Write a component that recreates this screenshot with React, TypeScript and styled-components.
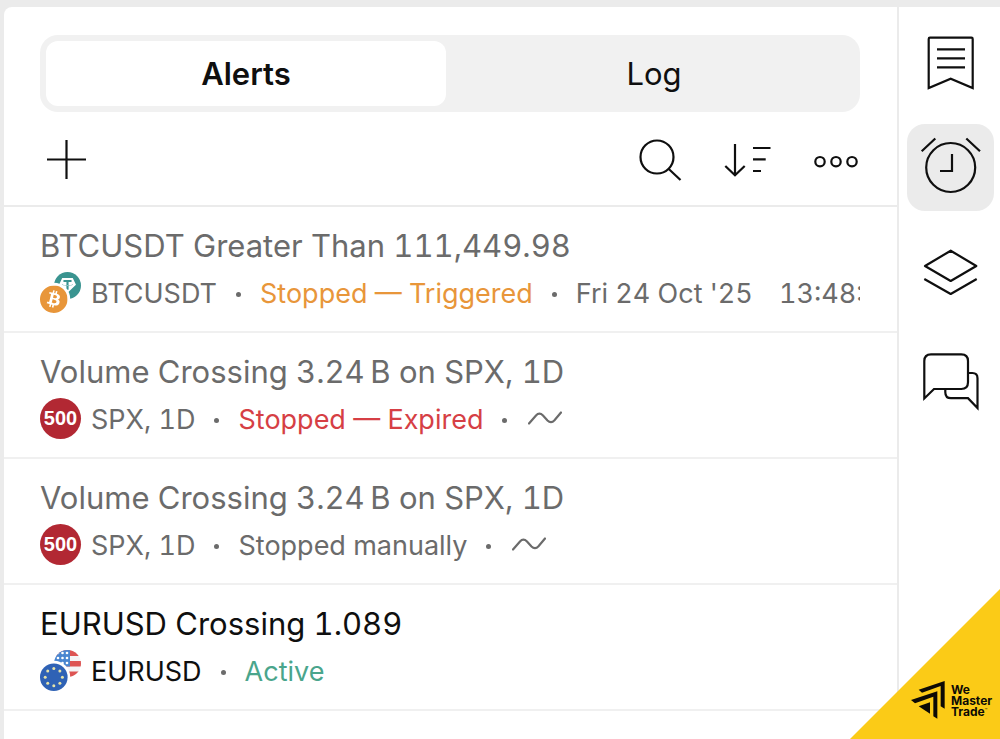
import React, { useState } from "react";
import styled, { createGlobalStyle } from "styled-components";
import { SiBitcoin, SiTether } from "react-icons/si";

const GlobalStyle = createGlobalStyle`
  *, *::before, *::after { box-sizing: border-box; }
  body {
    margin: 0;
    background: #ebebeb;
    color: #0f0f0f;
    font-family: Inter, "Liberation Sans", sans-serif;
    font-variant-numeric: tabular-nums;
  }
  button {
    margin: 0;
    padding: 0;
    border: 0;
    background: none;
    color: inherit;
    font: inherit;
    cursor: pointer;
  }
`;

const Page = styled.div`
  display: flex;
  min-height: 100vh;
  padding: 7px 0 0 4px;
`;

const Panel = styled.main`
  flex: 1;
  min-width: 0;
  background: #fff;
  border-top-left-radius: 8px;
`;

const Header = styled.header`
  padding: 28px 37px 0 36px;
  border-bottom: 2px solid #ebebeb;
`;

const Segmented = styled.div`
  display: flex;
  gap: 8px;
  height: 77px;
  padding: 6px;
  border-radius: 18px;
  background: #f1f1f1;
`;

const Segment = styled.button<{ $active: boolean }>`
  flex: 1 1 0;
  border-radius: 12px;
  background: ${(p) => (p.$active ? "#fff" : "transparent")};
  font-size: 31px;
  line-height: 40px;
  font-weight: ${(p) => (p.$active ? 600 : 400)};
`;

const Toolbar = styled.div`
  display: flex;
  justify-content: space-between;
  padding: 23px 0 22px;
`;

const ToolGroup = styled.div`
  display: flex;
  gap: 40px;
`;

const ToolButton = styled.button`
  width: 48px;
  height: 48px;
`;

const LineIcon = styled.svg`
  display: block;
  width: 100%;
  height: 100%;
  overflow: visible;
  fill: none;
  stroke: currentColor;
  stroke-width: 2.2;
`;

const AlertList = styled.ul`
  margin: 0;
  padding: 0;
  list-style: none;
`;

const AlertRow = styled.li<{ $active?: boolean }>`
  padding: 19px 37px 18px 36px;
  border-bottom: 2px solid #f0f0f0;
  color: ${(p) => (p.$active ? "#0f0f0f" : "#6b6b6b")};
`;

const AlertTitle = styled.h2`
  margin: 0 0 6px;
  font-size: 31px;
  line-height: 40px;
  font-weight: 400;
  white-space: nowrap;
`;

const AlertMeta = styled.div`
  display: flex;
  align-items: center;
  height: 41px;
  overflow: hidden;
  font-size: 27px;
  line-height: 38px;
  white-space: nowrap;
`;

const SymbolIcon = styled.svg`
  flex: none;
  width: 41px;
  height: 41px;
  margin-right: 10px;
`;

const IndexBadge = styled.span`
  flex: none;
  width: 41px;
  height: 41px;
  margin-right: 10px;
  border-radius: 50%;
  background: #b22833;
  color: #fff;
  font: bold 20px/41px "Liberation Sans", sans-serif;
  text-align: center;
`;

const MetaText = styled.span`
  padding-top: 3px;
`;

const Dot = styled.span`
  flex: none;
  width: 5px;
  height: 5px;
  margin: 4px 19px 0;
  border-radius: 50%;
  background: #6b6b6b;
`;

const tones = {
  warning: "#e8963a",
  danger: "#d63f45",
  muted: "#6b6b6b",
  success: "#4aa58c",
};

const Status = styled(MetaText)<{ $tone: keyof typeof tones }>`
  color: ${(p) => tones[p.$tone]};
`;

const Time = styled.time`
  display: flex;
  gap: 26px;
`;

const WaveIcon = styled.svg`
  flex: none;
  width: 34px;
  height: 16px;
  margin-left: 2px;
  fill: none;
  stroke: #6b6b6b;
  stroke-width: 2.2;
  stroke-linecap: round;
`;

const Sidebar = styled.nav`
  display: flex;
  flex: none;
  flex-direction: column;
  gap: 18px;
  padding: 12px 6px 12px 8px;
  border-left: 2px solid #ebebeb;
  background: #fff;
`;

const SideButton = styled.button<{ $active?: boolean }>`
  width: 87px;
  height: 87px;
  border-radius: 18px;
  background: ${(p) => (p.$active ? "#ebebeb" : "transparent")};
`;

const BrandCorner = styled.a`
  position: fixed;
  right: 0;
  bottom: 0;
  display: flex;
  justify-content: flex-end;
  align-items: flex-end;
  gap: 6px;
  width: 150px;
  height: 150px;
  padding: 0 6px 20px 0;
  background: #fbcb17;
  clip-path: polygon(100% 0, 100% 100%, 0 100%);
  color: #0c0a05;
  text-decoration: none;
`;

const BrandMark = styled.svg`
  width: 34px;
  height: 38px;
`;

const BrandName = styled.span`
  width: 43px;
  margin-bottom: 2px;
  font-size: 12px;
  line-height: 11px;
  font-weight: 700;
`;

const TradeMark = styled.small`
  font-size: 4px;
  line-height: 4px;
  vertical-align: 4px;
`;

const BtcUsdtIcon = () => (
  <SymbolIcon viewBox="0 0 41 41" role="img" aria-label="Bitcoin and Tether">
    <circle cx="27.5" cy="13.5" r="13.5" fill="#3a9490" />
    <SiTether x="19" y="5" size={17} color="#fff" />
    <circle cx="13.8" cy="27.2" r="16.4" fill="#fff" />
    <SiBitcoin x="0" y="13.4" size={27.6} color="#e8963a" />
  </SymbolIcon>
);

const euStars = Array.from({ length: 8 }, (_, i) => {
  const angle = (i * Math.PI) / 4;
  return { x: 13.8 + 8.6 * Math.cos(angle), y: 27.2 + 8.6 * Math.sin(angle) };
});

const EurUsdIcon = () => (
  <SymbolIcon viewBox="0 0 41 41" role="img" aria-label="Euro and US dollar">
    <clipPath id="usd-disc">
      <circle cx="27.5" cy="13.5" r="13.5" />
    </clipPath>
    <g clipPath="url(#usd-disc)">
      <rect x="14" width="27" height="27" fill="#f4f4f6" />
      <path d="M14 0h27v6H14zM14 11h27v5.5H14zM14 21.500h27V27H14z" fill="#dd5453" />
      <rect x="14" width="16" height="16.500" fill="#4a86d0" />
      <g fill="#fff">
        {[3, 8, 13].map((y) =>
          [18, 22.5, 27].map((x) => <circle key={`${x}-${y}`} cx={x} cy={y} r="1.3" />)
        )}
      </g>
    </g>
    <circle cx="13.8" cy="27.2" r="16.4" fill="#fff" />
    <circle cx="13.8" cy="27.2" r="13.8" fill="#2f62b5" />
    <g fill="#e6e3a8">
      {euStars.map((s, i) => (
        <circle key={i} cx={s.x} cy={s.y} r="1.5" />
      ))}
    </g>
  </SymbolIcon>
);

const Wave = () => (
  <WaveIcon viewBox="0 0 34 16" role="img" aria-label="Indicator">
    <path d="M1 12.500L8 4.500Q11.300 0.900 15 4.500L19.500 9.500Q23 13 26.500 9.300L33 1.500" />
  </WaveIcon>
);

export default function App() {
  const [tab, setTab] = useState<"alerts" | "log">("alerts");

  return (
    <>
      <GlobalStyle />
      <Page>
        <Panel>
          <Header>
            <Segmented role="tablist" aria-label="Alerts view">
              <Segment
                role="tab"
                aria-selected={tab === "alerts"}
                $active={tab === "alerts"}
                onClick={() => setTab("alerts")}
              >
                Alerts
              </Segment>
              <Segment
                role="tab"
                aria-selected={tab === "log"}
                $active={tab === "log"}
                onClick={() => setTab("log")}
              >
                Log
              </Segment>
            </Segmented>
            <Toolbar>
              <ToolButton aria-label="Create alert">
                <LineIcon viewBox="0 0 48 48">
                  <path d="M26.500 5v39M7 24.500h39" />
                </LineIcon>
              </ToolButton>
              <ToolGroup>
                <ToolButton aria-label="Search">
                  <LineIcon viewBox="0 0 48 48">
                    <circle cx="21" cy="22" r="16.500" />
                    <path d="M32.500 33.800L44.500 45" />
                  </LineIcon>
                </ToolButton>
                <ToolButton aria-label="Sort">
                  <LineIcon viewBox="0 0 48 48">
                    <path d="M11 9v31M1.300 31L11 40.300L20.700 31M29 13h17.500M29 24.300h12.700M29 36h8" />
                  </LineIcon>
                </ToolButton>
                <ToolButton aria-label="More">
                  <LineIcon viewBox="0 0 48 48">
                    <circle cx="8" cy="26.700" r="4.700" />
                    <circle cx="24" cy="26.700" r="4.700" />
                    <circle cx="40" cy="26.700" r="4.700" />
                  </LineIcon>
                </ToolButton>
              </ToolGroup>
            </Toolbar>
          </Header>

          <AlertList>
            <AlertRow>
              <AlertTitle>BTCUSDT Greater Than 111,449.98</AlertTitle>
              <AlertMeta>
                <BtcUsdtIcon />
                <MetaText>BTCUSDT</MetaText>
                <Dot />
                <Status $tone="warning">Stopped — Triggered</Status>
                <Dot />
                <Time>
                  <MetaText>Fri 24 Oct '25</MetaText>
                  <MetaText>13:48:</MetaText>
                </Time>
              </AlertMeta>
            </AlertRow>
            <AlertRow>
              <AlertTitle>Volume Crossing 3.24{"\u2009"}B on SPX, 1D</AlertTitle>
              <AlertMeta>
                <IndexBadge>500</IndexBadge>
                <MetaText>SPX, 1D</MetaText>
                <Dot />
                <Status $tone="danger">Stopped — Expired</Status>
                <Dot />
                <Wave />
              </AlertMeta>
            </AlertRow>
            <AlertRow>
              <AlertTitle>Volume Crossing 3.24{"\u2009"}B on SPX, 1D</AlertTitle>
              <AlertMeta>
                <IndexBadge>500</IndexBadge>
                <MetaText>SPX, 1D</MetaText>
                <Dot />
                <Status $tone="muted">Stopped manually</Status>
                <Dot />
                <Wave />
              </AlertMeta>
            </AlertRow>
            <AlertRow $active>
              <AlertTitle>EURUSD Crossing 1.089</AlertTitle>
              <AlertMeta>
                <EurUsdIcon />
                <MetaText>EURUSD</MetaText>
                <Dot />
                <Status $tone="success">Active</Status>
              </AlertMeta>
            </AlertRow>
          </AlertList>
        </Panel>

        <Sidebar aria-label="Tools">
          <SideButton aria-label="Watchlist">
            <LineIcon viewBox="0 0 87 87">
              <path d="M21.700 69V20q0-1.300 1.300-1.300h41.400q1.300 0 1.300 1.300V69L43.700 59.800zM30 30.300h28M30 39.300h28M30 48.300h28" />
            </LineIcon>
          </SideButton>
          <SideButton aria-label="Alerts" $active>
            <LineIcon viewBox="0 0 87 87">
              <circle cx="43.700" cy="43.500" r="24.500" />
              <path d="M45 30v17H33M14.700 27.300L28.300 14.500M59.300 14.500L73 27.300" />
            </LineIcon>
          </SideButton>
          <SideButton aria-label="Object tree">
            <LineIcon viewBox="0 0 87 87" strokeLinejoin="round">
              <path d="M43.700 21.700L69.300 37L43.700 52L18 37zM17.300 50L43.700 65L69.700 50" />
            </LineIcon>
          </SideButton>
          <SideButton aria-label="Chats">
            <LineIcon viewBox="0 0 87 87">
              <path d="M17.300 64.500V27q0-6.700 6.700-6.700h30.300q6.700 0 6.700 6.700v21.300q0 6.700-6.700 6.700H27z" />
              <path d="M61 39h4.300q5.200 0 5.200 5.200V74L61 64.200H44q-5.700 0-5.700-6V55" />
            </LineIcon>
          </SideButton>
        </Sidebar>

        <BrandCorner href="#">
          <BrandMark viewBox="214 302 102 114" fill="currentColor" aria-hidden="true">
            <path d="M237 328L315 302V385L303 378V317L247 337z" />
            <path d="M214 359L293 333V415L281 408V349L226 369z" />
            <path d="M237 378L271 366V400z" />
          </BrandMark>
          <BrandName>
            We Master Trade<TradeMark>™</TradeMark>
          </BrandName>
        </BrandCorner>
      </Page>
    </>
  );
}
